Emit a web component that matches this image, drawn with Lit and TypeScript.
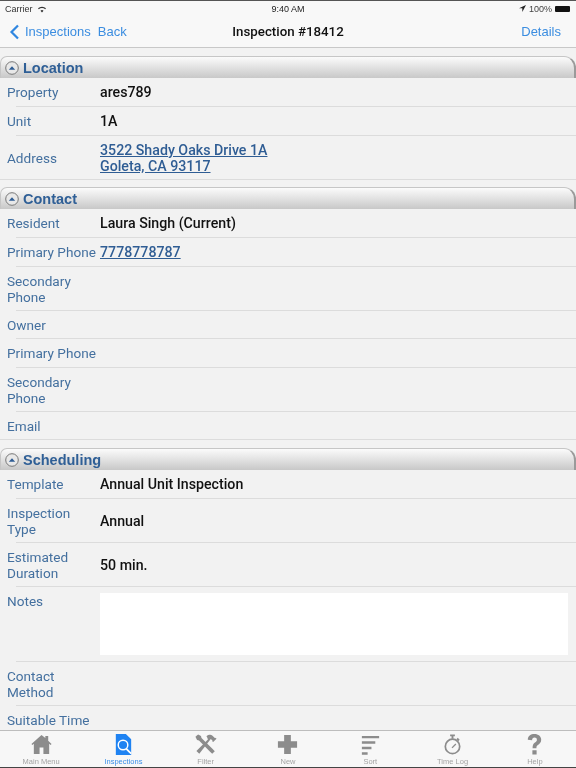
import { LitElement, html, css, svg } from "lit";
import { customElement } from "lit/decorators.js";

type Row = { label: string; value?: string; link?: string[]; h: number; notes?: boolean };
const sections: { title: string; rows: Row[] }[] = [
  { title: "Location", rows: [
    { label: "Property", value: "ares789", h: 29 },
    { label: "Unit", value: "1A", h: 29 },
    { label: "Address", link: ["3522 Shady Oaks Drive 1A", "Goleta, CA 93117"], h: 44 },
  ]},
  { title: "Contact", rows: [
    { label: "Resident", value: "Laura Singh (Current)", h: 29 },
    { label: "Primary Phone", link: ["7778778787"], h: 29 },
    { label: "Secondary Phone", h: 44 },
    { label: "Owner", h: 28 },
    { label: "Primary Phone", h: 29 },
    { label: "Secondary Phone", h: 44 },
    { label: "Email", h: 28 },
  ]},
  { title: "Scheduling", rows: [
    { label: "Template", value: "Annual Unit Inspection", h: 29 },
    { label: "Inspection Type", value: "Annual", h: 44 },
    { label: "Estimated Duration", value: "50 min.", h: 44 },
    { label: "Notes", notes: true, h: 75 },
    { label: "Contact Method", h: 44 },
    { label: "Suitable Time", h: 29 },
  ]},
];

const tabIcons: Record<string, unknown> = {
  home: svg`<path d="M12 2 1.500 11.500l1 1L4 11.300V22h6v-7h4v7h6V11.300l1.500 1.200 1-1L19 8V3h-3v2.300Z"/>`,
  doc: svg`<path d="M4 1h10.500L20 6.500V23H4Z"/><circle cx="11.500" cy="12.500" r="5" fill="none" stroke="#fff" stroke-width="1.500"/><path d="m15 16.500 5 5" stroke="#fff" stroke-width="1.800"/>`,
  tools: svg`<path d="M3 2.500 1.500 4 3.200 7.300l2 .5L16.500 19.200 19 21.700l2.700-2.700-2.500-2.500L7.800 5.200l-.5-2-3-1.700Z"/><path d="M13 3.500c2-1.800 4.500-2 6-1l3 3 .5-.5 1 1-3.500 3.500-1-1 .3-.6-1.800-1.700L5.500 21.700 2.500 18.700 14.500 6.700C14.200 5.500 13.700 4.300 13 3.500Z"/>`,
  plus: svg`<path d="M8.500 2h7v6.500H22v7h-6.500V22h-7v-6.500H2v-7h6.500Z"/>`,
  sort: svg`<path d="M3 3h18v2.600H3ZM3 8.700h14v2.600H3ZM3 14.400h10V17H3ZM3 20h6v2.600H3Z"/>`,
  clock: svg`<circle cx="12" cy="14" r="7.500" fill="none" stroke="currentColor" stroke-width="1.800"/><path d="M9.500 1.500h5v2h-5ZM11 3h2v3h-2ZM17.500 5l2 2-1.500 1.500-2-2ZM11 15l4-4 1 1-4 4Z"/>`,
  help: svg`<path d="M5 7c0-4 3-6 7-6s7 2.500 7 6c0 3-2 4.500-3.500 5.500-1.300.9-1.500 1.700-1.500 3.500H10c0-3 .5-4.500 2.500-6 1.300-1 2-1.600 2-3s-1-2.200-2.500-2.200S9.500 6 9.500 7.500ZM9.800 18h4.400v4.500H9.800Z"/>`,
};
const tabs = [
  { label: "Main Menu", icon: "home" },
  { label: "Inspections", icon: "doc", active: true },
  { label: "Filter", icon: "tools" },
  { label: "New", icon: "plus" },
  { label: "Sort", icon: "sort" },
  { label: "Time Log", icon: "clock" },
  { label: "Help", icon: "help" },
];

@customElement("app-root")
export class AppRoot extends LitElement {
  static styles = css`
    :host { display: block; width: 576px; height: 768px; }
    .page { width: 576px; height: 768px; display: flex; flex-direction: column; overflow: hidden; position: relative;
      background: #f2f2f2; font-family: "Liberation Sans", Arial, sans-serif; border-top: 1px solid #555; border-bottom: 1px solid #444; box-sizing: border-box; filter: blur(0.3px); }
    .top { flex: none; background: #f8f8f8; border-bottom: 1px solid #c8c8c8; height: 47px; box-sizing: border-box; display: flex; flex-direction: column; }
    .status { height: 15px; display: grid; grid-template-columns: 1fr auto 1fr; align-items: center; padding: 0 5px; font-size: 9px; color: #222; }
    .status .l { display: flex; gap: 4px; align-items: center; color: #333; }
    .status .r { display: flex; gap: 3px; align-items: center; justify-content: flex-end; color: #444; }
    .batt { width: 15px; height: 6px; background: #111; border-radius: 1px; margin-right: 1px; }
    .nav { flex: 1; display: grid; grid-template-columns: 1fr auto 1fr; align-items: center; padding: 0 15px; font-size: 13px; color: #3b8de0; }
    .nav .back { display: flex; align-items: center; gap: 5px; margin-left: -6px; }
    .nav .back span + span { margin-left: 2px; }
    .nav b { color: #111; font-family: Roboto, "Liberation Sans", sans-serif; font-weight: 500; font-size: 13.300px; }
    .nav .det { text-align: right; }
    .content { flex: 1; min-height: 0; overflow: hidden; padding-top: 8px; }
    section { margin-bottom: 7px; }
    section:nth-child(2) { margin-bottom: 8px; }
    .head { height: 22px; box-sizing: border-box; display: flex; align-items: center; gap: 4px; padding: 0 0 0 4px;
      border: 1px solid #c6c6c6; border-bottom: none; border-right: 2px solid #9a9a9a; border-radius: 7px 12px 0 0;
      background: linear-gradient(#fbfbfb, #ececec 30%, #c8c8c8); color: #2f5f96; font-size: 14.500px; font-weight: 700; }
    .toggle { width: 14px; height: 14px; flex: none; }
    .row { box-sizing: border-box; display: flex; align-items: center; padding: 0 8px 1px 7px; position: relative; }
    .row::after { content: ""; position: absolute; left: 16px; right: 0; bottom: 0; height: 1px; background: #dcdcdc; }
    .row:last-child::after { left: 0; }
    .lab { width: 93px; flex: none; color: #44709f; font-family: Roboto, "Liberation Sans", sans-serif; font-size: 13.600px; line-height: 16px; }
    .val { color: #111; font-family: Roboto, "Liberation Sans", sans-serif; font-size: 14.200px; font-weight: 500; line-height: 16px; }
    .val.link { color: #2f5d94; text-decoration: underline; }
    .row.notes { align-items: flex-start; padding-top: 6px; }
    .notebox { flex: 1; height: 62px; background: #fff; }
    .tabbar { position: absolute; left: 0; right: 0; bottom: 0; height: 37px; background: #f7f7f7; border-top: 1px solid #bdbdbd;
      display: grid; grid-template-columns: repeat(7, 1fr); box-sizing: border-box; }
    .tab { display: flex; flex-direction: column; align-items: center; color: #8c8c8c; font-size: 7.500px; padding-top: 2px; gap: 1px; }
    .tab span { color: #a3a3a3; }
    .tab.on { color: #1f83f2; }
    .tab.on span { color: #3b8fe8; }
    .tab svg { width: 23px; height: 23px; fill: currentColor; display: block; }
  `;

  render() {
    return html`<div class="page">
      <div class="top">
        <div class="status">
          <div class="l">Carrier
            <svg width="10" height="8" viewBox="0 0 10 8"><path d="M5 7.500 3.500 5.800a2.200 2.200 0 0 1 3 0ZM1 3.300a5.800 5.800 0 0 1 8 0l-.8.900a4.600 4.600 0 0 0-6.400 0Z" fill="#333"/></svg>
          </div>
          <div>9:40 AM</div>
          <div class="r">
            <svg width="7" height="7" viewBox="0 0 7 7"><path d="M7 0 0 3.200h3.300V7Z" fill="#222"/></svg>
            <span>100%</span><div class="batt"></div>
          </div>
        </div>
        <div class="nav">
          <div class="back">
            <svg width="11" height="16" viewBox="0 0 11 16"><path d="M9 1.500 2.500 8 9 14.500" fill="none" stroke="#2f86e0" stroke-width="2.200"/></svg>
            <span>Inspections</span><span>Back</span>
          </div>
          <b>Inspection #18412</b>
          <div class="det">Details</div>
        </div>
      </div>
      <div class="content">
        ${sections.map((s) => html`<section>
          <div class="head">
            <svg class="toggle" viewBox="0 0 14 14"><circle cx="7" cy="7" r="6.300" fill="#e8e8e8" stroke="#777"/><path d="M3.800 8.700 7 5.200l3.200 3.500Z" fill="#2f5d94"/></svg>
            <span>${s.title}</span>
          </div>
          ${s.rows.map((r) => html`<div class="row ${r.notes ? "notes" : ""}" style="height:${r.h}px">
            <div class="lab">${r.label}</div>
            ${r.notes ? html`<div class="notebox"></div>` : r.link
              ? html`<div class="val link">${r.link.map((l) => html`<div>${l}</div>`)}</div>`
              : r.value ? html`<div class="val">${r.value}</div>` : ""}
          </div>`)}
        </section>`)}
      </div>
      <div class="tabbar">
        ${tabs.map((t) => html`<div class="tab ${t.active ? "on" : ""}">
          <svg viewBox="0 0 24 24">${tabIcons[t.icon]}</svg>
          <span>${t.label}</span>
        </div>`)}
      </div>
    </div>`;
  }
}
